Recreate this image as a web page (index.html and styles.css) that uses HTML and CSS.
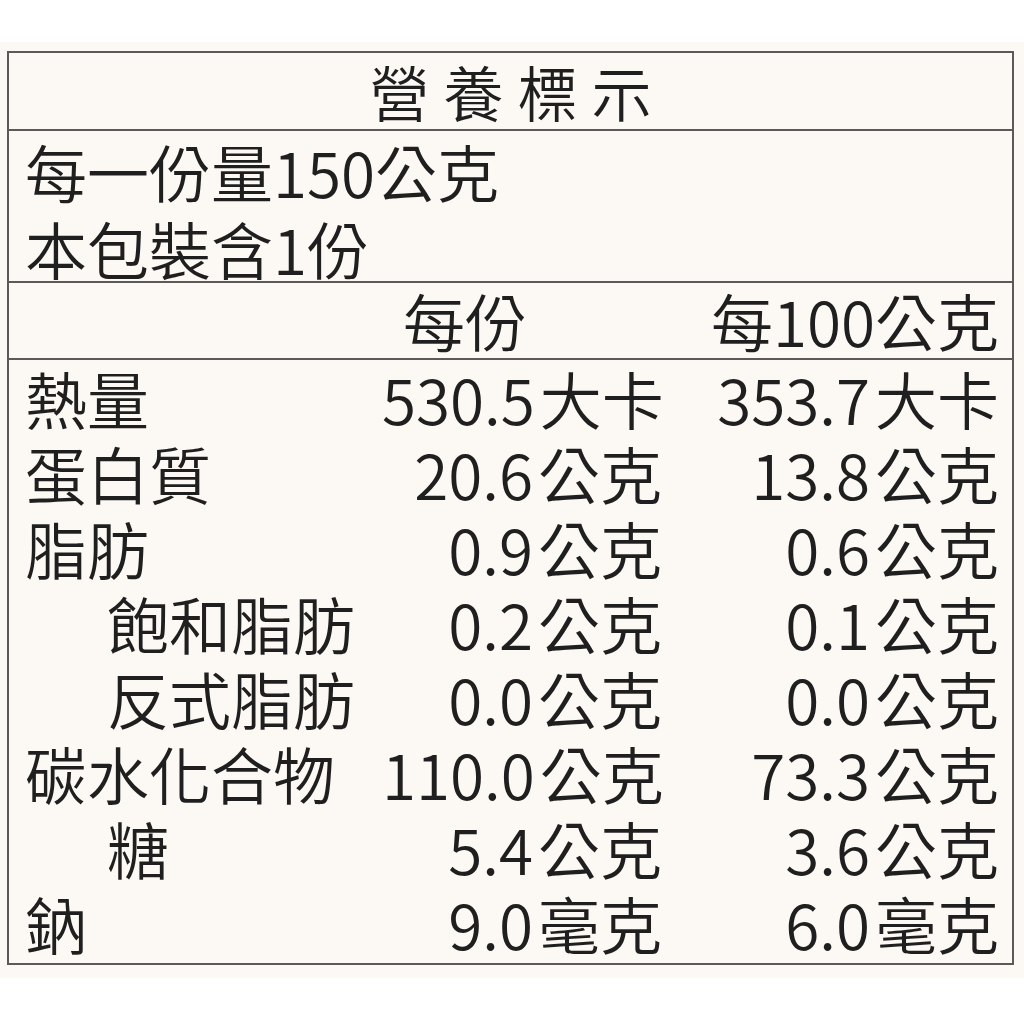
FILE: index.html
```html
<!DOCTYPE html>
<html lang="zh-Hant">
<head>
<meta charset="utf-8">
<title>營養標示</title>
<link rel="stylesheet" href="styles.css">
</head>
<body>
<div class="page">
  <div class="facts">
    <div class="title">營養標示</div>
    <div class="serving">
      <div class="line">每一份量150公克</div>
      <div class="line">本包裝含1份</div>
    </div>
    <div class="head grid">
      <div class="cell-label"></div>
      <div class="cell-a head-a">每份</div>
      <div class="cell-b">每100公克</div>
    </div>
    <div class="body">
      <div class="grid row"><div class="cell-label">熱量</div><div class="cell-a">530.5<span class="unit">大卡</span></div><div class="cell-b">353.7<span class="unit">大卡</span></div></div>
      <div class="grid row"><div class="cell-label">蛋白質</div><div class="cell-a">20.6<span class="unit">公克</span></div><div class="cell-b">13.8<span class="unit">公克</span></div></div>
      <div class="grid row"><div class="cell-label">脂肪</div><div class="cell-a">0.9<span class="unit">公克</span></div><div class="cell-b">0.6<span class="unit">公克</span></div></div>
      <div class="grid row"><div class="cell-label indent">飽和脂肪</div><div class="cell-a">0.2<span class="unit">公克</span></div><div class="cell-b">0.1<span class="unit">公克</span></div></div>
      <div class="grid row"><div class="cell-label indent">反式脂肪</div><div class="cell-a">0.0<span class="unit">公克</span></div><div class="cell-b">0.0<span class="unit">公克</span></div></div>
      <div class="grid row"><div class="cell-label">碳水化合物</div><div class="cell-a">110.0<span class="unit">公克</span></div><div class="cell-b">73.3<span class="unit">公克</span></div></div>
      <div class="grid row"><div class="cell-label indent">糖</div><div class="cell-a">5.4<span class="unit">公克</span></div><div class="cell-b">3.6<span class="unit">公克</span></div></div>
      <div class="grid row"><div class="cell-label">鈉</div><div class="cell-a">9.0<span class="unit">毫克</span></div><div class="cell-b">6.0<span class="unit">毫克</span></div></div>
    </div>
  </div>
</div>
</body>
</html>
```
FILE: styles.css
```css
html, body {
  margin: 0;
  padding: 0;
  background: #ffffff;
}
body {
  font-family: "Noto Sans CJK TC", "Noto Sans CJK SC", sans-serif;
  font-weight: 350;
  color: #1f1f1f;
}
.page {
  margin-top: 42px;
  background: #fcf9f4;
  padding: 9px 10px 13px 7px;
}
.facts {
  border: 2px solid #5a5a5a;
  box-sizing: border-box;
  width: 1007px;
}
.title {
  height: 76px;
  line-height: 76px;
  font-size: 60px;
  letter-spacing: 14px;
  padding-left: 14px;
  text-align: center;
  border-bottom: 2px solid #5a5a5a;
}
.serving {
  height: 152px;
  box-sizing: border-box;
  padding: 2px 13px 0 16px;
  border-bottom: 2px solid #5a5a5a;
  font-size: 62px;
}
.line {
  height: 77px;
  line-height: 77px;
}
.grid {
  display: grid;
  grid-template-columns: 1fr 280px 337px;
  padding: 0 13px 0 16px;
  font-size: 62px;
}
.head {
  height: 75px;
  line-height: 75px;
  border-bottom: 2px solid #5a5a5a;
}
.head-a {
  padding-right: 135px;
}
.body {
  padding: 1px 0 2px;
}
.row {
  height: 75px;
  line-height: 75px;
}
.cell-label {
  white-space: nowrap;
}
.indent {
  padding-left: 82px;
}
.cell-a, .cell-b {
  text-align: right;
  white-space: nowrap;
}
.unit {
  margin-left: 5px;
}
```
